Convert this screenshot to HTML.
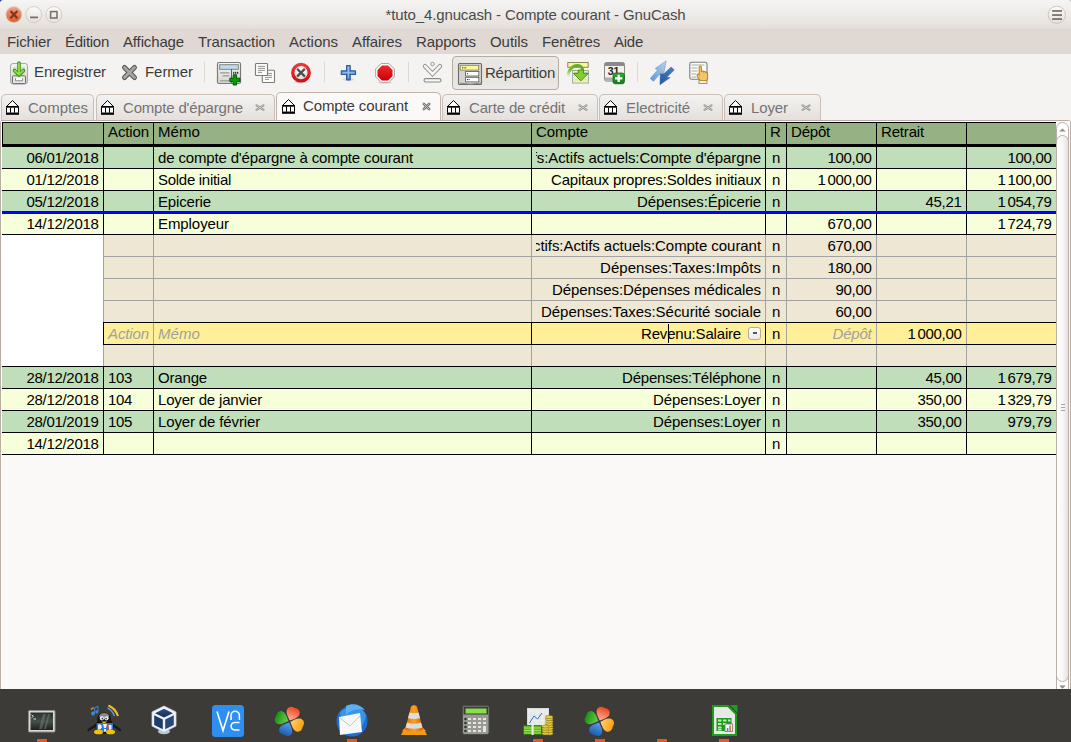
<!DOCTYPE html>
<html><head><meta charset="utf-8">
<style>
*{box-sizing:border-box;margin:0;padding:0}
html,body{width:1071px;height:742px;overflow:hidden;background:#f4f3f1;font-family:"Liberation Sans",sans-serif;position:relative}
.abs{position:absolute}
svg{position:absolute;overflow:visible}
#desk{left:0;top:0;width:1071px;height:742px;background:#c4c4c4}
#win{left:0;top:0;width:1071px;height:689px;background:#f4f3f1;border-radius:4px 4px 0 0;overflow:hidden}
#title{left:0;top:0;width:1071px;height:30px;background:linear-gradient(#f6f5f4,#e4dfda);border-bottom:1px solid #dcd5cf}
#title .t{position:absolute;left:0;width:1071px;top:6px;text-align:center;font-size:15px;color:#4a4a4a;}
#menu{left:0;top:30px;width:1071px;height:24px;background:#dfd8d3;}
#menu span{position:absolute;top:3px;font-size:15px;color:#3c3c3c;}
#tool{left:0;top:54px;width:1071px;height:39px;background:#f4f3f1;}
.tl{position:absolute;font-size:15px;color:#3c3c3c}
.sep{position:absolute;top:62px;width:1px;height:20px;background:#dcd8d3}
.tab{position:absolute;top:94px;height:27px;border:1px solid #c9bfb6;border-bottom:none;border-radius:5px 5px 0 0;background:linear-gradient(#f3f2f0,#e3dfdb);}
.tab .lb{position:absolute;top:5px;font-size:15px;color:#747474}
.tab.act{background:#faf9f8;top:92px;height:30px;border-color:#bfb4aa}
.tab.act .lb{color:#3c3c3c;top:6px}
.bank{position:absolute;top:6px;left:4px}
.hc{position:absolute;top:123px;height:21px;background:#96B183;font-size:15px;line-height:18px;padding-left:4px;white-space:nowrap;overflow:hidden;color:#000}
.c{position:absolute;height:21px;font-size:15px;line-height:22px;white-space:nowrap;overflow:hidden;color:#000}
.c .ra{position:absolute;right:4px;top:0}
.c.la{padding-left:4px}
.c.cc{text-align:center}
.c.ph{color:#a0a0a0;font-style:italic}
.ns{display:inline-block;width:2px}
.ind{position:absolute;top:739px;width:10px;height:3px;background:#e05a24}
</style></head><body>
<div id="desk" class="abs"></div>
<div class="abs" style="left:0;top:0;width:3px;height:4px;background:#2040b0"></div>
<div id="win" class="abs">
<div id="title" class="abs"><div class="t"><span class="tx"  style="letter-spacing:-0.123px">*tuto_4.gnucash - Compte courant - GnuCash</span></div></div>
<!-- window buttons -->
<svg width="70" height="29" style="left:0;top:0">
<defs>
<linearGradient id="gcl" x1="0" y1="0" x2="0" y2="1"><stop offset="0" stop-color="#f6a27e"/><stop offset="1" stop-color="#e2592c"/></linearGradient>
<linearGradient id="gbt" x1="0" y1="0" x2="0" y2="1"><stop offset="0" stop-color="#fbfbfa"/><stop offset="1" stop-color="#e4e0dc"/></linearGradient>
</defs>
<circle cx="13.8" cy="14.6" r="7.9" fill="url(#gcl)" stroke="#d9c9bf" stroke-width="0.8"/>
<path d="M10.5 11 L17.3 18.2 M17.3 11 L10.5 18.2" stroke="#7a3a22" stroke-width="2.4" stroke-linecap="butt"/>
<circle cx="33.8" cy="14.6" r="8" fill="url(#gbt)" stroke="#cfc7c0" stroke-width="0.9"/>
<rect x="30" y="16.5" width="8" height="1.8" fill="#7b736b"/>
<circle cx="53.8" cy="14.6" r="8" fill="url(#gbt)" stroke="#cfc7c0" stroke-width="0.9"/>
<rect x="50.6" y="11.6" width="6.4" height="6.4" fill="none" stroke="#7b736b" stroke-width="1.6"/>
</svg>
<!-- hamburger -->
<svg width="20" height="20" style="left:1047px;top:5px">
<circle cx="9.8" cy="9.8" r="8.6" fill="url(#gbt)" stroke="#c9bfb7" stroke-width="0.9"/>
<rect x="5.1" y="5.1" width="9.9" height="1.7" fill="#756d63"/>
<rect x="5.1" y="9.2" width="9.9" height="1.7" fill="#756d63"/>
<rect x="5.1" y="13.2" width="9.9" height="1.7" fill="#756d63"/>
</svg>
<div id="menu" class="abs">
<span class="tx" style="left:7px;letter-spacing:-0.145px" >Fichier</span>
<span class="tx" style="left:65px;letter-spacing:-0.268px" >Édition</span>
<span class="tx" style="left:123px;letter-spacing:-0.142px" >Affichage</span>
<span class="tx" style="left:198px;letter-spacing:-0.074px" >Transaction</span>
<span class="tx" style="left:289px;letter-spacing:-0.029px" >Actions</span>
<span class="tx" style="left:352px;letter-spacing:-0.074px" >Affaires</span>
<span class="tx" style="left:416px;letter-spacing:-0.109px" >Rapports</span>
<span class="tx" style="left:490px;letter-spacing:-0.057px" >Outils</span>
<span class="tx" style="left:542px;letter-spacing:-0.150px" >Fenêtres</span>
<span class="tx" style="left:614px;letter-spacing:-0.258px" >Aide</span>
</div>
<div id="tool" class="abs"></div>
<!--TOOLBAR-->
<svg width="24" height="24" style="left:8px;top:61px">
<defs>
<linearGradient id="gsv" x1="0" y1="0" x2="0" y2="1"><stop offset="0" stop-color="#f4f4f2"/><stop offset="1" stop-color="#cfcfcc"/></linearGradient>
<linearGradient id="gar" x1="0" y1="0" x2="1" y2="0"><stop offset="0" stop-color="#4aa81a"/><stop offset="0.5" stop-color="#a8f060"/><stop offset="1" stop-color="#4aa81a"/></linearGradient>
</defs>
<rect x="2.5" y="2.5" width="17" height="20.5" rx="2.5" fill="url(#gsv)" stroke="#a9a9a6" stroke-width="1"/>
<rect x="5" y="6" width="12" height="10" fill="#dcdcda"/>
<rect x="4.5" y="14.8" width="13" height="7.8" rx="1" fill="#e8e8e6" stroke="#6b6b68" stroke-width="1"/>
<path d="M7.5 17.3 v2.5 h7 v-2.5" fill="#fff" stroke="#8a8a86" stroke-width="1"/>
<path d="M11 2 v10 M6.5 9.5 L11 14 L15.5 9.5" fill="none" stroke="#3c9a12" stroke-width="3.6" stroke-linecap="round" stroke-linejoin="round"/>
<path d="M11 2.5 v10 M6.8 9.6 L11 13.6 L15.2 9.6" fill="none" stroke="#8ee04a" stroke-width="1.8" stroke-linecap="round" stroke-linejoin="round"/>
</svg>
<span class="tl tx"  style="left:34px;top:63px;letter-spacing:-0.124px">Enregistrer</span>
<svg width="20" height="20" style="left:120px;top:63px">
<path d="M4.5 4.5 L14.5 14.5 M14.5 4.5 L4.5 14.5" stroke="#5a5a58" stroke-width="5" stroke-linecap="round"/>
<path d="M4.5 4.5 L14.5 14.5 M14.5 4.5 L4.5 14.5" stroke="#a6a6a3" stroke-width="2.8" stroke-linecap="round"/>
</svg>
<span class="tl tx"  style="left:145px;top:63px;letter-spacing:-0.057px">Fermer</span>
<div class="sep" style="left:204px"></div>
<svg width="26" height="24" style="left:216px;top:61px">
<defs><linearGradient id="gnt" x1="0" y1="0" x2="0" y2="1"><stop offset="0" stop-color="#f6f6f5"/><stop offset="1" stop-color="#d6d6d3"/></linearGradient></defs>
<rect x="1.5" y="1.5" width="23" height="21" rx="1.5" fill="url(#gnt)" stroke="#7d7874" stroke-width="1.2"/>
<rect x="3.7" y="3.7" width="18.6" height="4.6" fill="#bcdaf2" stroke="#7b806a" stroke-width="0.9"/>
<path d="M15.5 8 V22" stroke="#55524e" stroke-width="0.9"/>
<rect x="4" y="11" width="9.5" height="1.6" fill="#a9a9a6"/>
<rect x="6.5" y="14" width="7" height="1.6" fill="#a9a9a6"/>
<rect x="4" y="19" width="9.5" height="1.6" fill="#a9a9a6"/>
<rect x="17" y="10.8" width="1.3" height="2" fill="#333"/><rect x="19" y="10.8" width="1.3" height="2" fill="#333"/><rect x="21" y="10.8" width="1.3" height="2" fill="#333"/>
<path d="M17.2 13.8 h3.4 v3.4 h3.4 v3.4 h-3.4 v3.4 h-3.4 v-3.4 h-3.4 v-3.4 h3.4 z" fill="#00a000" stroke="#005800" stroke-width="1"/>
</svg>
<svg width="22" height="22" style="left:254px;top:62px">
<rect x="8.3" y="8.3" width="12.2" height="12.2" rx="0.8" fill="#fbfbfa" stroke="#7d7c78" stroke-width="1.1"/>
<path d="M11 11.4 h7 M11 13.4 h7 M11 15.4 h7 M11 17.4 h4" stroke="#8a8a86" stroke-width="0.9"/>
<rect x="1.5" y="1.5" width="12" height="12" rx="0.8" fill="#fbfbfa" stroke="#7d7c78" stroke-width="1.1"/>
<path d="M4 4.4 h7 M4 6.4 h7 M4 8.4 h7 M4 10.4 h4" stroke="#8a8a86" stroke-width="0.9"/>
</svg>
<svg width="24" height="24" style="left:289px;top:61px">
<defs><radialGradient id="gdl" cx="0.5" cy="0.35" r="0.65"><stop offset="0" stop-color="#ffffff"/><stop offset="1" stop-color="#dcdcda"/></radialGradient>
<linearGradient id="gdr" x1="0" y1="0" x2="0" y2="1"><stop offset="0" stop-color="#f03a3a"/><stop offset="1" stop-color="#c80f14"/></linearGradient></defs>
<ellipse cx="12" cy="21" rx="7" ry="1.5" fill="#000" opacity="0.15"/>
<circle cx="12" cy="11.7" r="9.9" fill="url(#gdr)"/>
<circle cx="12" cy="11.7" r="6.6" fill="url(#gdl)"/>
<path d="M8.8 8.5 L15.2 14.9 M15.2 8.5 L8.8 14.9" stroke="#4e4e4c" stroke-width="2.4" stroke-linecap="round"/>
</svg>
<div class="sep" style="left:324px"></div>
<svg width="20" height="20" style="left:338px;top:62px">
<defs><linearGradient id="gpl" x1="0" y1="0" x2="0" y2="1"><stop offset="0" stop-color="#8cb8ea"/><stop offset="1" stop-color="#4a80c8"/></linearGradient></defs>
<ellipse cx="10.4" cy="17.6" rx="6" ry="1.4" fill="#000" opacity="0.1"/>
<path d="M8.6 3.6 h3.6 v5.3 h5.3 v3.6 h-5.3 v5.3 h-3.6 v-5.3 h-5.3 v-3.6 h5.3 z" fill="url(#gpl)" stroke="#2d5c9c" stroke-width="1.2" stroke-linejoin="round"/>
<path d="M10.4 5 v11 M4.6 10.7 h11.6" stroke="#b8d4f4" stroke-width="0.8" opacity="0.7"/>
</svg>
<svg width="24" height="24" style="left:373px;top:61px">
<defs><linearGradient id="gst" x1="0" y1="0" x2="0" y2="1"><stop offset="0" stop-color="#f02a2a"/><stop offset="1" stop-color="#c80008"/></linearGradient></defs>
<ellipse cx="12" cy="21.5" rx="7" ry="1.3" fill="#000" opacity="0.12"/>
<path d="M8.1 2.5 h7.8 l5.5 5.5 v7.8 l-5.5 5.5 h-7.8 l-5.5 -5.5 v-7.8 z" fill="#fafaf9" stroke="#a8a8a5" stroke-width="1"/>
<path d="M8.9 4.6 h6.2 l4.4 4.4 v6.2 l-4.4 4.4 h-6.2 l-4.4 -4.4 v-6.2 z" fill="url(#gst)"/>
</svg>
<div class="sep" style="left:408px"></div>
<svg width="22" height="22" style="left:422px;top:61px">
<path d="M3 5.2 L10.5 12.8 L18 5.2" fill="none" stroke="#8e8e8a" stroke-width="4.4" stroke-linecap="round" stroke-linejoin="miter"/>
<path d="M3 5.2 L10.5 12.8 L18 5.2" fill="none" stroke="#f6f6f4" stroke-width="2.6" stroke-linecap="round" stroke-linejoin="miter"/>
<circle cx="10.5" cy="3" r="1.8" fill="#f4f4f2" stroke="#9a9a96" stroke-width="1"/>
<rect x="2" y="17.6" width="17" height="3.4" rx="1.7" fill="#f8f8f6" stroke="#8a8a86" stroke-width="1.1"/>
</svg>
<div class="abs" style="left:452px;top:56px;width:107px;height:34px;border:1px solid #b8aca1;border-radius:4px;background:linear-gradient(#ebe8e5,#e6e2de 60%,#ece9e6)"></div>
<svg width="26" height="24" style="left:457px;top:62px">
<rect x="1.5" y="1.5" width="23" height="21" rx="1" fill="#d4d4d1" stroke="#6e6c68" stroke-width="1.1"/>
<rect x="3.2" y="3.3" width="18.5" height="4.8" fill="#fbf59a" stroke="#7c7a60" stroke-width="0.8"/>
<path d="M5 5.8 h4.5" stroke="#333" stroke-width="1" stroke-dasharray="1 0.6"/>
<rect x="8.6" y="9.4" width="13.2" height="4.6" fill="#fff" stroke="#555" stroke-width="0.8"/>
<rect x="8.6" y="15.3" width="13.2" height="4.6" fill="#fff" stroke="#555" stroke-width="0.8"/>
<rect x="10" y="11.2" width="1" height="1" fill="#222"/>
<rect x="10" y="17.1" width="1" height="1" fill="#222"/><rect x="11.6" y="17.1" width="1" height="1" fill="#222"/>
<path d="M3 21 Q13 23.5 24 21" stroke="#8a8884" stroke-width="1" fill="none"/>
</svg>
<span class="tl tx"  style="left:485px;top:64px;letter-spacing:-0.232px">Répartition</span>
<svg width="26" height="26" style="left:564px;top:60px">
<defs><linearGradient id="grc" x1="0" y1="1" x2="0.6" y2="0"><stop offset="0" stop-color="#7cc83a" stop-opacity="0"/><stop offset="0.5" stop-color="#74c030"/><stop offset="1" stop-color="#5cb020"/></linearGradient>
<linearGradient id="gpn" x1="0" y1="0" x2="0" y2="1"><stop offset="0" stop-color="#a8e0a0"/><stop offset="0.6" stop-color="#e8f8e0"/><stop offset="1" stop-color="#b8e8b0"/></linearGradient></defs>
<rect x="3.8" y="2.5" width="20.4" height="4.8" fill="#fbf59c" stroke="#8c8a5a" stroke-width="1"/>
<rect x="8.6" y="10.6" width="15.8" height="12.4" fill="#f0f0ee" stroke="#a2a29e" stroke-width="1"/>
<rect x="9.9" y="12.1" width="13.7" height="8.5" fill="url(#gpn)"/>
<rect x="9.9" y="20.4" width="13.7" height="1.8" fill="#f8f0a0"/>
<path d="M4 17 C4 9.5 9 5.6 13.6 5.6 C16.6 5.6 18.6 8 18.8 10.5" fill="none" stroke="url(#grc)" stroke-width="3"/>
<path d="M14.2 10 h5.2 v3.4 h5 L16.8 20.8 L9.4 13.4 h4.8 Z" fill="#86cc2c" stroke="#5a8c10" stroke-width="1"/>
</svg>
<svg width="24" height="26" style="left:603px;top:60px">
<defs><linearGradient id="gcal" x1="0" y1="0" x2="0" y2="1"><stop offset="0" stop-color="#2fae30"/><stop offset="1" stop-color="#157a18"/></linearGradient></defs>
<rect x="1.5" y="2.5" width="20" height="18.6" rx="1.8" fill="#f1f1ef" stroke="#8b8b88" stroke-width="1"/>
<rect x="2" y="3" width="19" height="3" fill="#8a8a87"/>
<rect x="2" y="17.5" width="19" height="3.2" fill="#aeaeab"/>
<text x="10.6" y="14.6" font-family="Liberation Sans" font-weight="bold" font-size="10.5" fill="#1e1e1e" text-anchor="middle">31</text>
<rect x="10" y="13" width="11.4" height="10.8" rx="2.2" fill="url(#gcal)" stroke="#0d5a10" stroke-width="0.7"/>
<path d="M15.7 14.7 v7.4 M12 18.4 h7.4" stroke="#fff" stroke-width="2.3"/>
</svg>
<div class="sep" style="left:637px"></div>
<svg width="28" height="28" style="left:649px;top:60px">
<defs>
<linearGradient id="gb1" x1="0" y1="1" x2="1" y2="0"><stop offset="0" stop-color="#5f95d2"/><stop offset="1" stop-color="#b9d3f0"/></linearGradient>
<linearGradient id="gb2" x1="1" y1="0" x2="0" y2="1"><stop offset="0" stop-color="#4a82c6"/><stop offset="1" stop-color="#2458a0"/></linearGradient>
</defs>
<path d="M17.2 0.9 L14.6 14.3 L12 12.86 L4.45 21.36 L1.15 18.44 L8.7 9.94 L6.1 8.5 Z" fill="url(#gb1)" stroke="#5d8fc8" stroke-width="0.5"/>
<path d="M11 24.8 L11.3 13.7 L14.68 14.06 L22.18 6.91 L25.22 10.09 L17.72 17.24 L21.1 17.6 Z" fill="url(#gb2)" stroke="#2a5a9c" stroke-width="0.5"/>
</svg>
<svg width="24" height="26" style="left:688px;top:60px">
<rect x="1.8" y="2.2" width="17.2" height="17" rx="1.8" fill="#fafaf9" stroke="#7c7b78" stroke-width="1.1"/>
<path d="M3.5 5 h13 M3.5 8 h6 M3.5 11 h6 M3.5 14 h5 M3.5 17 h5" stroke="#c4c8c0" stroke-width="1.4"/>
<rect x="11" y="20" width="8" height="3.5" fill="none" stroke="#6a9ad8" stroke-width="1"/>
<path d="M12.4 20.5 C10.6 19 9.2 17 9.2 15.2 C9.2 13.8 10.4 13.6 11.2 14.6 L11.2 7.2 C11.2 5.6 13.4 5.6 13.4 7.2 L13.4 11.4 C14.6 10.8 15.4 11 15.6 11.8 C16.6 11.2 17.6 11.6 17.8 12.6 C18.8 12.2 19.6 12.8 19.6 13.8 L19.6 17.8 C19.6 19.4 18.6 20.6 17.6 20.8 Z" fill="#f2c46e" stroke="#c98414" stroke-width="1.1"/>
</svg>

<!--/TOOLBAR-->
<!--TABS-->
<div class="tab" style="left:1px;width:93px;top:94px;height:27px"></div>
<svg width="14" height="16" style="left:6px;top:100px"><path d="M6.5 0.5 L0.6 6.5 H12.4 Z" fill="#fff" stroke="#000" stroke-width="1" stroke-linejoin="miter"/><rect x="0" y="6.2" width="13" height="1.4" fill="#000"/><rect x="0" y="7.4" width="13" height="5.4" fill="#000"/><rect x="1" y="7.8" width="3" height="4.8" fill="#fff"/><rect x="5" y="7.8" width="3" height="4.8" fill="#fff"/><rect x="9" y="7.8" width="3" height="4.8" fill="#fff"/><rect x="0" y="12.8" width="13" height="2" fill="#000"/></svg>
<span class="tl tx"  style="left:28px;top:99px;color:#747474;letter-spacing:-0.004px">Comptes</span>
<div class="tab" style="left:96px;width:179px;top:94px;height:27px"></div>
<svg width="14" height="16" style="left:101px;top:100px"><path d="M6.5 0.5 L0.6 6.5 H12.4 Z" fill="#fff" stroke="#000" stroke-width="1" stroke-linejoin="miter"/><rect x="0" y="6.2" width="13" height="1.4" fill="#000"/><rect x="0" y="7.4" width="13" height="5.4" fill="#000"/><rect x="1" y="7.8" width="3" height="4.8" fill="#fff"/><rect x="5" y="7.8" width="3" height="4.8" fill="#fff"/><rect x="9" y="7.8" width="3" height="4.8" fill="#fff"/><rect x="0" y="12.8" width="13" height="2" fill="#000"/></svg>
<span class="tl tx"  style="left:123px;top:99px;color:#747474;letter-spacing:-0.185px">Compte d'épargne</span>
<svg width="11" height="8" style="left:255px;top:104px"><path d="M1.5 1.3 L8.5 5.8 M8.5 1.3 L1.5 5.8" stroke="#878b86" stroke-width="2" stroke-linecap="round"/><path d="M1.5 1.3 L8.5 5.8 M8.5 1.3 L1.5 5.8" stroke="#d4d7d3" stroke-width="0.8" stroke-linecap="round"/></svg>
<div class="tab act" style="left:276px;width:165px;top:92px;height:30px"></div>
<svg width="14" height="16" style="left:282px;top:99px"><path d="M6.5 0.5 L0.6 6.5 H12.4 Z" fill="#fff" stroke="#000" stroke-width="1" stroke-linejoin="miter"/><rect x="0" y="6.2" width="13" height="1.4" fill="#000"/><rect x="0" y="7.4" width="13" height="5.4" fill="#000"/><rect x="1" y="7.8" width="3" height="4.8" fill="#fff"/><rect x="5" y="7.8" width="3" height="4.8" fill="#fff"/><rect x="9" y="7.8" width="3" height="4.8" fill="#fff"/><rect x="0" y="12.8" width="13" height="2" fill="#000"/></svg>
<span class="tl tx"  style="left:303px;top:97px;color:#3c3c3c;letter-spacing:-0.124px">Compte courant</span>
<svg width="10" height="10" style="left:422px;top:102px"><path d="M1.8 1.8 L7.2 7.2 M7.2 1.8 L1.8 7.2" stroke="#70746f" stroke-width="2.6" stroke-linecap="round"/><path d="M1.8 1.8 L7.2 7.2 M7.2 1.8 L1.8 7.2" stroke="#c9ccc8" stroke-width="0.9" stroke-linecap="round"/></svg>
<div class="tab" style="left:442px;width:156px;top:94px;height:27px"></div>
<svg width="14" height="16" style="left:447px;top:100px"><path d="M6.5 0.5 L0.6 6.5 H12.4 Z" fill="#fff" stroke="#000" stroke-width="1" stroke-linejoin="miter"/><rect x="0" y="6.2" width="13" height="1.4" fill="#000"/><rect x="0" y="7.4" width="13" height="5.4" fill="#000"/><rect x="1" y="7.8" width="3" height="4.8" fill="#fff"/><rect x="5" y="7.8" width="3" height="4.8" fill="#fff"/><rect x="9" y="7.8" width="3" height="4.8" fill="#fff"/><rect x="0" y="12.8" width="13" height="2" fill="#000"/></svg>
<span class="tl tx"  style="left:469px;top:99px;color:#747474;letter-spacing:-0.159px">Carte de crédit</span>
<svg width="11" height="8" style="left:578px;top:104px"><path d="M1.5 1.3 L8.5 5.8 M8.5 1.3 L1.5 5.8" stroke="#878b86" stroke-width="2" stroke-linecap="round"/><path d="M1.5 1.3 L8.5 5.8 M8.5 1.3 L1.5 5.8" stroke="#d4d7d3" stroke-width="0.8" stroke-linecap="round"/></svg>
<div class="tab" style="left:599px;width:124px;top:94px;height:27px"></div>
<svg width="14" height="16" style="left:604px;top:100px"><path d="M6.5 0.5 L0.6 6.5 H12.4 Z" fill="#fff" stroke="#000" stroke-width="1" stroke-linejoin="miter"/><rect x="0" y="6.2" width="13" height="1.4" fill="#000"/><rect x="0" y="7.4" width="13" height="5.4" fill="#000"/><rect x="1" y="7.8" width="3" height="4.8" fill="#fff"/><rect x="5" y="7.8" width="3" height="4.8" fill="#fff"/><rect x="9" y="7.8" width="3" height="4.8" fill="#fff"/><rect x="0" y="12.8" width="13" height="2" fill="#000"/></svg>
<span class="tl tx"  style="left:626px;top:99px;color:#747474;letter-spacing:-0.094px">Electricité</span>
<svg width="11" height="8" style="left:703px;top:104px"><path d="M1.5 1.3 L8.5 5.8 M8.5 1.3 L1.5 5.8" stroke="#878b86" stroke-width="2" stroke-linecap="round"/><path d="M1.5 1.3 L8.5 5.8 M8.5 1.3 L1.5 5.8" stroke="#d4d7d3" stroke-width="0.8" stroke-linecap="round"/></svg>
<div class="tab" style="left:724px;width:97px;top:94px;height:27px"></div>
<svg width="14" height="16" style="left:729px;top:100px"><path d="M6.5 0.5 L0.6 6.5 H12.4 Z" fill="#fff" stroke="#000" stroke-width="1" stroke-linejoin="miter"/><rect x="0" y="6.2" width="13" height="1.4" fill="#000"/><rect x="0" y="7.4" width="13" height="5.4" fill="#000"/><rect x="1" y="7.8" width="3" height="4.8" fill="#fff"/><rect x="5" y="7.8" width="3" height="4.8" fill="#fff"/><rect x="9" y="7.8" width="3" height="4.8" fill="#fff"/><rect x="0" y="12.8" width="13" height="2" fill="#000"/></svg>
<span class="tl tx"  style="left:751px;top:99px;color:#747474;letter-spacing:-0.106px">Loyer</span>
<svg width="11" height="8" style="left:801px;top:104px"><path d="M1.5 1.3 L8.5 5.8 M8.5 1.3 L1.5 5.8" stroke="#878b86" stroke-width="2" stroke-linecap="round"/><path d="M1.5 1.3 L8.5 5.8 M8.5 1.3 L1.5 5.8" stroke="#d4d7d3" stroke-width="0.8" stroke-linecap="round"/></svg>
<!--/TABS-->
<!-- register frame -->
<div class="abs" style="left:0;top:120px;width:1071px;height:569px;border:1px solid #b9aea4;border-bottom:none;border-radius:3px 3px 0 0;background:#fff"></div>
<div class="abs" style="left:1px;top:121px;width:1055px;height:568px;background:#faf9f7"></div>
<div class="abs" style="left:1px;top:121px;width:1055px;height:1px;background:#fff"></div>
<div class="abs" style="left:1px;top:121px;width:1px;height:568px;background:#fff"></div>
<!--GRID-->
<div class="abs" style="left:2px;top:122px;width:1054px;height:25px;background:#000"></div>
<div class="hc" style="left:3px;width:100px"><span class="tx"  style="letter-spacing:0.000px"></span></div>
<div class="hc" style="left:104px;width:49px"><span class="tx"  style="letter-spacing:-0.117px">Action</span></div>
<div class="hc" style="left:154px;width:377px"><span class="tx"  style="letter-spacing:0.078px">Mémo</span></div>
<div class="hc" style="left:532px;width:233px"><span class="tx"  style="letter-spacing:-0.089px">Compte</span></div>
<div class="hc" style="left:766px;width:20px"><span class="tx"  style="letter-spacing:0.156px">R</span></div>
<div class="hc" style="left:787px;width:89px"><span class="tx"  style="letter-spacing:-0.206px">Dépôt</span></div>
<div class="hc" style="left:877px;width:89px"><span class="tx"  style="letter-spacing:-0.170px">Retrait</span></div>
<div class="hc" style="left:967px;width:89px"><span class="tx"  style="letter-spacing:0.000px"></span></div>
<div class="abs" style="left:2px;top:147px;width:1054px;height:22px;background:#BFDEB9"></div>
<div class="abs" style="left:103px;top:147px;width:1px;height:21px;background:#000"></div>
<div class="abs" style="left:153px;top:147px;width:1px;height:21px;background:#000"></div>
<div class="abs" style="left:531px;top:147px;width:1px;height:21px;background:#000"></div>
<div class="abs" style="left:765px;top:147px;width:1px;height:21px;background:#000"></div>
<div class="abs" style="left:786px;top:147px;width:1px;height:21px;background:#000"></div>
<div class="abs" style="left:876px;top:147px;width:1px;height:21px;background:#000"></div>
<div class="abs" style="left:966px;top:147px;width:1px;height:21px;background:#000"></div>
<div class="c" style="top:147px;left:2px;width:101px"><span class="ra tx"  style="right:4.5px;letter-spacing:-0.308px">06/01/2018</span></div>
<div class="c la" style="top:147px;left:154px;width:377px"><span class="tx"  style="letter-spacing:-0.154px">de compte d'épargne à compte courant</span></div>
<div class="c" style="top:147px;left:536px;width:229px"><span class="ra tx"  style="right:4px;letter-spacing:-0.088px">Actifs:Actifs actuels:Compte d'épargne</span></div>
<div class="c cc" style="top:147px;left:766px;width:20px"><span class="tx"  style="letter-spacing:-0.344px">n</span></div>
<div class="c" style="top:147px;left:787px;width:89px"><span class="ra tx"  style="right:4.5px;letter-spacing:-0.315px">100,00</span></div>
<div class="c" style="top:147px;left:967px;width:89px"><span class="ra tx"  style="right:4.5px;letter-spacing:-0.315px">100,00</span></div>
<div class="abs" style="left:2px;top:169px;width:1054px;height:22px;background:#F6FFDA"></div>
<div class="abs" style="left:103px;top:169px;width:1px;height:21px;background:#000"></div>
<div class="abs" style="left:153px;top:169px;width:1px;height:21px;background:#000"></div>
<div class="abs" style="left:531px;top:169px;width:1px;height:21px;background:#000"></div>
<div class="abs" style="left:765px;top:169px;width:1px;height:21px;background:#000"></div>
<div class="abs" style="left:786px;top:169px;width:1px;height:21px;background:#000"></div>
<div class="abs" style="left:876px;top:169px;width:1px;height:21px;background:#000"></div>
<div class="abs" style="left:966px;top:169px;width:1px;height:21px;background:#000"></div>
<div class="c" style="top:169px;left:2px;width:101px"><span class="ra tx"  style="right:4.5px;letter-spacing:-0.308px">01/12/2018</span></div>
<div class="c la" style="top:169px;left:154px;width:377px"><span class="tx"  style="letter-spacing:-0.286px">Solde initial</span></div>
<div class="c" style="top:169px;left:536px;width:229px"><span class="ra tx"  style="right:4px;letter-spacing:-0.160px">Capitaux propres:Soldes initiaux</span></div>
<div class="c cc" style="top:169px;left:766px;width:20px"><span class="tx"  style="letter-spacing:-0.344px">n</span></div>
<div class="c" style="top:169px;left:787px;width:89px"><span class="ra tx"  style="right:4.5px;letter-spacing:-0.319px">1<span class="ns"></span>000,00</span></div>
<div class="c" style="top:169px;left:967px;width:89px"><span class="ra tx"  style="right:4.5px;letter-spacing:-0.321px">1<span class="ns"></span>100,00</span></div>
<div class="abs" style="left:2px;top:191px;width:1054px;height:22px;background:#BFDEB9"></div>
<div class="abs" style="left:103px;top:191px;width:1px;height:21px;background:#000"></div>
<div class="abs" style="left:153px;top:191px;width:1px;height:21px;background:#000"></div>
<div class="abs" style="left:531px;top:191px;width:1px;height:21px;background:#000"></div>
<div class="abs" style="left:765px;top:191px;width:1px;height:21px;background:#000"></div>
<div class="abs" style="left:786px;top:191px;width:1px;height:21px;background:#000"></div>
<div class="abs" style="left:876px;top:191px;width:1px;height:21px;background:#000"></div>
<div class="abs" style="left:966px;top:191px;width:1px;height:21px;background:#000"></div>
<div class="c" style="top:191px;left:2px;width:101px"><span class="ra tx"  style="right:4.5px;letter-spacing:-0.308px">05/12/2018</span></div>
<div class="c la" style="top:191px;left:154px;width:377px"><span class="tx"  style="letter-spacing:-0.150px">Epicerie</span></div>
<div class="c" style="top:191px;left:536px;width:229px"><span class="ra tx"  style="right:4px;letter-spacing:-0.112px">Dépenses:Épicerie</span></div>
<div class="c cc" style="top:191px;left:766px;width:20px"><span class="tx"  style="letter-spacing:-0.344px">n</span></div>
<div class="c" style="top:191px;left:877px;width:89px"><span class="ra tx"  style="right:4.5px;letter-spacing:-0.309px">45,21</span></div>
<div class="c" style="top:191px;left:967px;width:89px"><span class="ra tx"  style="right:4.5px;letter-spacing:-0.319px">1<span class="ns"></span>054,79</span></div>
<div class="abs" style="left:2px;top:213px;width:1054px;height:22px;background:#F6FFDA"></div>
<div class="abs" style="left:103px;top:213px;width:1px;height:21px;background:#000"></div>
<div class="abs" style="left:153px;top:213px;width:1px;height:21px;background:#000"></div>
<div class="abs" style="left:531px;top:213px;width:1px;height:21px;background:#000"></div>
<div class="abs" style="left:765px;top:213px;width:1px;height:21px;background:#000"></div>
<div class="abs" style="left:786px;top:213px;width:1px;height:21px;background:#000"></div>
<div class="abs" style="left:876px;top:213px;width:1px;height:21px;background:#000"></div>
<div class="abs" style="left:966px;top:213px;width:1px;height:21px;background:#000"></div>
<div class="c" style="top:213px;left:2px;width:101px"><span class="ra tx"  style="right:4.5px;letter-spacing:-0.308px">14/12/2018</span></div>
<div class="c la" style="top:213px;left:154px;width:377px"><span class="tx"  style="letter-spacing:-0.078px">Employeur</span></div>
<div class="c" style="top:213px;left:787px;width:89px"><span class="ra tx"  style="right:4.5px;letter-spacing:-0.315px">670,00</span></div>
<div class="c" style="top:213px;left:967px;width:89px"><span class="ra tx"  style="right:4.5px;letter-spacing:-0.319px">1<span class="ns"></span>724,79</span></div>
<div class="abs" style="left:2px;top:235px;width:101px;height:22px;background:#fff"></div>
<div class="abs" style="left:103px;top:235px;width:953px;height:22px;background:#EDE7D3"></div>
<div class="abs" style="left:103px;top:235px;width:1px;height:22px;background:#a3a3a3"></div>
<div class="abs" style="left:153px;top:235px;width:1px;height:21px;background:#a3a3a3"></div>
<div class="abs" style="left:531px;top:235px;width:1px;height:21px;background:#a3a3a3"></div>
<div class="abs" style="left:765px;top:235px;width:1px;height:21px;background:#a3a3a3"></div>
<div class="abs" style="left:786px;top:235px;width:1px;height:21px;background:#a3a3a3"></div>
<div class="abs" style="left:876px;top:235px;width:1px;height:21px;background:#a3a3a3"></div>
<div class="abs" style="left:966px;top:235px;width:1px;height:21px;background:#a3a3a3"></div>
<div class="c" style="top:235px;left:536px;width:229px"><span class="ra tx"  style="right:4px;letter-spacing:-0.059px">Actifs:Actifs actuels:Compte courant</span></div>
<div class="c cc" style="top:235px;left:766px;width:20px"><span class="tx"  style="letter-spacing:-0.344px">n</span></div>
<div class="c" style="top:235px;left:787px;width:89px"><span class="ra tx"  style="right:4.5px;letter-spacing:-0.315px">670,00</span></div>
<div class="abs" style="left:2px;top:257px;width:101px;height:22px;background:#fff"></div>
<div class="abs" style="left:103px;top:257px;width:953px;height:22px;background:#EDE7D3"></div>
<div class="abs" style="left:103px;top:257px;width:1px;height:22px;background:#a3a3a3"></div>
<div class="abs" style="left:153px;top:257px;width:1px;height:21px;background:#a3a3a3"></div>
<div class="abs" style="left:531px;top:257px;width:1px;height:21px;background:#a3a3a3"></div>
<div class="abs" style="left:765px;top:257px;width:1px;height:21px;background:#a3a3a3"></div>
<div class="abs" style="left:786px;top:257px;width:1px;height:21px;background:#a3a3a3"></div>
<div class="abs" style="left:876px;top:257px;width:1px;height:21px;background:#a3a3a3"></div>
<div class="abs" style="left:966px;top:257px;width:1px;height:21px;background:#a3a3a3"></div>
<div class="c" style="top:257px;left:536px;width:229px"><span class="ra tx"  style="right:4px;letter-spacing:0.043px">Dépenses:Taxes:Impôts</span></div>
<div class="c cc" style="top:257px;left:766px;width:20px"><span class="tx"  style="letter-spacing:-0.344px">n</span></div>
<div class="c" style="top:257px;left:787px;width:89px"><span class="ra tx"  style="right:4.5px;letter-spacing:-0.315px">180,00</span></div>
<div class="abs" style="left:2px;top:279px;width:101px;height:22px;background:#fff"></div>
<div class="abs" style="left:103px;top:279px;width:953px;height:22px;background:#EDE7D3"></div>
<div class="abs" style="left:103px;top:279px;width:1px;height:22px;background:#a3a3a3"></div>
<div class="abs" style="left:153px;top:279px;width:1px;height:21px;background:#a3a3a3"></div>
<div class="abs" style="left:531px;top:279px;width:1px;height:21px;background:#a3a3a3"></div>
<div class="abs" style="left:765px;top:279px;width:1px;height:21px;background:#a3a3a3"></div>
<div class="abs" style="left:786px;top:279px;width:1px;height:21px;background:#a3a3a3"></div>
<div class="abs" style="left:876px;top:279px;width:1px;height:21px;background:#a3a3a3"></div>
<div class="abs" style="left:966px;top:279px;width:1px;height:21px;background:#a3a3a3"></div>
<div class="c" style="top:279px;left:536px;width:229px"><span class="ra tx"  style="right:4px;letter-spacing:-0.072px">Dépenses:Dépenses médicales</span></div>
<div class="c cc" style="top:279px;left:766px;width:20px"><span class="tx"  style="letter-spacing:-0.344px">n</span></div>
<div class="c" style="top:279px;left:787px;width:89px"><span class="ra tx"  style="right:4.5px;letter-spacing:-0.309px">90,00</span></div>
<div class="abs" style="left:2px;top:301px;width:101px;height:22px;background:#fff"></div>
<div class="abs" style="left:103px;top:301px;width:953px;height:22px;background:#EDE7D3"></div>
<div class="abs" style="left:103px;top:301px;width:1px;height:22px;background:#a3a3a3"></div>
<div class="abs" style="left:153px;top:301px;width:1px;height:21px;background:#a3a3a3"></div>
<div class="abs" style="left:531px;top:301px;width:1px;height:21px;background:#a3a3a3"></div>
<div class="abs" style="left:765px;top:301px;width:1px;height:21px;background:#a3a3a3"></div>
<div class="abs" style="left:786px;top:301px;width:1px;height:21px;background:#a3a3a3"></div>
<div class="abs" style="left:876px;top:301px;width:1px;height:21px;background:#a3a3a3"></div>
<div class="abs" style="left:966px;top:301px;width:1px;height:21px;background:#a3a3a3"></div>
<div class="c" style="top:301px;left:536px;width:229px"><span class="ra tx"  style="right:4px;letter-spacing:-0.031px">Dépenses:Taxes:Sécurité sociale</span></div>
<div class="c cc" style="top:301px;left:766px;width:20px"><span class="tx"  style="letter-spacing:-0.344px">n</span></div>
<div class="c" style="top:301px;left:787px;width:89px"><span class="ra tx"  style="right:4.5px;letter-spacing:-0.309px">60,00</span></div>
<div class="abs" style="left:2px;top:323px;width:101px;height:22px;background:#fff"></div>
<div class="abs" style="left:103px;top:323px;width:953px;height:22px;background:#FFEF98"></div>
<div class="abs" style="left:103px;top:323px;width:1px;height:22px;background:#000"></div>
<div class="abs" style="left:153px;top:323px;width:1px;height:21px;background:#a3a3a3"></div>
<div class="abs" style="left:531px;top:323px;width:1px;height:21px;background:#000"></div>
<div class="abs" style="left:765px;top:323px;width:1px;height:21px;background:#000"></div>
<div class="abs" style="left:786px;top:323px;width:1px;height:21px;background:#a3a3a3"></div>
<div class="abs" style="left:876px;top:323px;width:1px;height:21px;background:#a3a3a3"></div>
<div class="abs" style="left:966px;top:323px;width:1px;height:21px;background:#a3a3a3"></div>
<div class="c la ph" style="top:323px;left:104px;width:49px"><span class="tx"  style="letter-spacing:-0.117px">Action</span></div>
<div class="c la ph" style="top:323px;left:154px;width:377px"><span class="tx"  style="letter-spacing:0.078px">Mémo</span></div>
<div class="c" style="top:323px;left:536px;width:229px"><span class="ra tx"  style="right:24px;letter-spacing:-0.183px">Revenu:Salaire</span></div>
<div class="c cc" style="top:323px;left:766px;width:20px"><span class="tx"  style="letter-spacing:-0.344px">n</span></div>
<div class="c ph" style="top:323px;left:787px;width:89px"><span class="ra tx"  style="right:4.5px;letter-spacing:-0.206px">Dépôt</span></div>
<div class="c" style="top:323px;left:877px;width:89px"><span class="ra tx"  style="right:4.5px;letter-spacing:-0.319px">1<span class="ns"></span>000,00</span></div>
<div class="abs" style="left:2px;top:345px;width:101px;height:22px;background:#fff"></div>
<div class="abs" style="left:103px;top:345px;width:953px;height:22px;background:#EDE7D3"></div>
<div class="abs" style="left:103px;top:345px;width:1px;height:22px;background:#a3a3a3"></div>
<div class="abs" style="left:153px;top:345px;width:1px;height:21px;background:#a3a3a3"></div>
<div class="abs" style="left:531px;top:345px;width:1px;height:21px;background:#a3a3a3"></div>
<div class="abs" style="left:765px;top:345px;width:1px;height:21px;background:#a3a3a3"></div>
<div class="abs" style="left:786px;top:345px;width:1px;height:21px;background:#a3a3a3"></div>
<div class="abs" style="left:876px;top:345px;width:1px;height:21px;background:#a3a3a3"></div>
<div class="abs" style="left:966px;top:345px;width:1px;height:21px;background:#a3a3a3"></div>
<div class="abs" style="left:2px;top:367px;width:1054px;height:22px;background:#BFDEB9"></div>
<div class="abs" style="left:103px;top:367px;width:1px;height:21px;background:#000"></div>
<div class="abs" style="left:153px;top:367px;width:1px;height:21px;background:#000"></div>
<div class="abs" style="left:531px;top:367px;width:1px;height:21px;background:#000"></div>
<div class="abs" style="left:765px;top:367px;width:1px;height:21px;background:#000"></div>
<div class="abs" style="left:786px;top:367px;width:1px;height:21px;background:#000"></div>
<div class="abs" style="left:876px;top:367px;width:1px;height:21px;background:#000"></div>
<div class="abs" style="left:966px;top:367px;width:1px;height:21px;background:#000"></div>
<div class="c" style="top:367px;left:2px;width:101px"><span class="ra tx"  style="right:4.5px;letter-spacing:-0.308px">28/12/2018</span></div>
<div class="c la" style="top:367px;left:104px;width:49px"><span class="tx"  style="letter-spacing:-0.344px">103</span></div>
<div class="c la" style="top:367px;left:154px;width:377px"><span class="tx"  style="letter-spacing:-0.174px">Orange</span></div>
<div class="c" style="top:367px;left:536px;width:229px"><span class="ra tx"  style="right:4px;letter-spacing:-0.201px">Dépenses:Téléphone</span></div>
<div class="c cc" style="top:367px;left:766px;width:20px"><span class="tx"  style="letter-spacing:-0.344px">n</span></div>
<div class="c" style="top:367px;left:877px;width:89px"><span class="ra tx"  style="right:4.5px;letter-spacing:-0.309px">45,00</span></div>
<div class="c" style="top:367px;left:967px;width:89px"><span class="ra tx"  style="right:4.5px;letter-spacing:-0.319px">1<span class="ns"></span>679,79</span></div>
<div class="abs" style="left:2px;top:389px;width:1054px;height:22px;background:#F6FFDA"></div>
<div class="abs" style="left:103px;top:389px;width:1px;height:21px;background:#000"></div>
<div class="abs" style="left:153px;top:389px;width:1px;height:21px;background:#000"></div>
<div class="abs" style="left:531px;top:389px;width:1px;height:21px;background:#000"></div>
<div class="abs" style="left:765px;top:389px;width:1px;height:21px;background:#000"></div>
<div class="abs" style="left:786px;top:389px;width:1px;height:21px;background:#000"></div>
<div class="abs" style="left:876px;top:389px;width:1px;height:21px;background:#000"></div>
<div class="abs" style="left:966px;top:389px;width:1px;height:21px;background:#000"></div>
<div class="c" style="top:389px;left:2px;width:101px"><span class="ra tx"  style="right:4.5px;letter-spacing:-0.308px">28/12/2018</span></div>
<div class="c la" style="top:389px;left:104px;width:49px"><span class="tx"  style="letter-spacing:-0.344px">104</span></div>
<div class="c la" style="top:389px;left:154px;width:377px"><span class="tx"  style="letter-spacing:-0.171px">Loyer de janvier</span></div>
<div class="c" style="top:389px;left:536px;width:229px"><span class="ra tx"  style="right:4px;letter-spacing:-0.088px">Dépenses:Loyer</span></div>
<div class="c cc" style="top:389px;left:766px;width:20px"><span class="tx"  style="letter-spacing:-0.344px">n</span></div>
<div class="c" style="top:389px;left:877px;width:89px"><span class="ra tx"  style="right:4.5px;letter-spacing:-0.315px">350,00</span></div>
<div class="c" style="top:389px;left:967px;width:89px"><span class="ra tx"  style="right:4.5px;letter-spacing:-0.319px">1<span class="ns"></span>329,79</span></div>
<div class="abs" style="left:2px;top:411px;width:1054px;height:22px;background:#BFDEB9"></div>
<div class="abs" style="left:103px;top:411px;width:1px;height:21px;background:#000"></div>
<div class="abs" style="left:153px;top:411px;width:1px;height:21px;background:#000"></div>
<div class="abs" style="left:531px;top:411px;width:1px;height:21px;background:#000"></div>
<div class="abs" style="left:765px;top:411px;width:1px;height:21px;background:#000"></div>
<div class="abs" style="left:786px;top:411px;width:1px;height:21px;background:#000"></div>
<div class="abs" style="left:876px;top:411px;width:1px;height:21px;background:#000"></div>
<div class="abs" style="left:966px;top:411px;width:1px;height:21px;background:#000"></div>
<div class="c" style="top:411px;left:2px;width:101px"><span class="ra tx"  style="right:4.5px;letter-spacing:-0.308px">28/01/2019</span></div>
<div class="c la" style="top:411px;left:104px;width:49px"><span class="tx"  style="letter-spacing:-0.344px">105</span></div>
<div class="c la" style="top:411px;left:154px;width:377px"><span class="tx"  style="letter-spacing:-0.139px">Loyer de février</span></div>
<div class="c" style="top:411px;left:536px;width:229px"><span class="ra tx"  style="right:4px;letter-spacing:-0.088px">Dépenses:Loyer</span></div>
<div class="c cc" style="top:411px;left:766px;width:20px"><span class="tx"  style="letter-spacing:-0.344px">n</span></div>
<div class="c" style="top:411px;left:877px;width:89px"><span class="ra tx"  style="right:4.5px;letter-spacing:-0.315px">350,00</span></div>
<div class="c" style="top:411px;left:967px;width:89px"><span class="ra tx"  style="right:4.5px;letter-spacing:-0.315px">979,79</span></div>
<div class="abs" style="left:2px;top:433px;width:1054px;height:22px;background:#F6FFDA"></div>
<div class="abs" style="left:103px;top:433px;width:1px;height:21px;background:#000"></div>
<div class="abs" style="left:153px;top:433px;width:1px;height:21px;background:#000"></div>
<div class="abs" style="left:531px;top:433px;width:1px;height:21px;background:#000"></div>
<div class="abs" style="left:765px;top:433px;width:1px;height:21px;background:#000"></div>
<div class="abs" style="left:786px;top:433px;width:1px;height:21px;background:#000"></div>
<div class="abs" style="left:876px;top:433px;width:1px;height:21px;background:#000"></div>
<div class="abs" style="left:966px;top:433px;width:1px;height:21px;background:#000"></div>
<div class="c" style="top:433px;left:2px;width:101px"><span class="ra tx"  style="right:4.5px;letter-spacing:-0.308px">14/12/2018</span></div>
<div class="c cc" style="top:433px;left:766px;width:20px"><span class="tx"  style="letter-spacing:-0.344px">n</span></div>
<div class="abs" style="left:2px;top:168px;width:1054px;height:1px;background:#000"></div>
<div class="abs" style="left:2px;top:190px;width:1054px;height:1px;background:#000"></div>
<div class="abs" style="left:2px;top:212px;width:1054px;height:1px;background:#000"></div>
<div class="abs" style="left:2px;top:234px;width:1054px;height:1px;background:#000"></div>
<div class="abs" style="left:103px;top:256px;width:953px;height:1px;background:#a3a3a3"></div>
<div class="abs" style="left:103px;top:278px;width:953px;height:1px;background:#a3a3a3"></div>
<div class="abs" style="left:103px;top:300px;width:953px;height:1px;background:#a3a3a3"></div>
<div class="abs" style="left:2px;top:322px;width:101px;height:1px;background:#fff"></div>
<div class="abs" style="left:103px;top:322px;width:953px;height:1px;background:#000"></div>
<div class="abs" style="left:2px;top:344px;width:101px;height:1px;background:#fff"></div>
<div class="abs" style="left:103px;top:344px;width:953px;height:1px;background:#000"></div>
<div class="abs" style="left:2px;top:366px;width:1054px;height:1px;background:#000"></div>
<div class="abs" style="left:2px;top:388px;width:1054px;height:1px;background:#000"></div>
<div class="abs" style="left:2px;top:410px;width:1054px;height:1px;background:#000"></div>
<div class="abs" style="left:2px;top:432px;width:1054px;height:1px;background:#000"></div>
<div class="abs" style="left:2px;top:454px;width:1054px;height:1px;background:#000"></div>
<div class="abs" style="left:2px;top:211px;width:1054px;height:3px;background:#0000ff"></div>
<div class="abs" style="left:668px;top:324px;width:1px;height:19px;background:#000"></div>
<div class="abs" style="left:748px;top:327px;width:13px;height:13px;border:1px solid #b3aca4;border-radius:3px;background:linear-gradient(#ffffff,#ebe8e4)"></div>
<div class="abs" style="left:753px;top:332px;width:4px;height:2px;background:#555"></div>
<!--/GRID-->
<!--SCROLL-->
<div class="abs" style="left:1056px;top:121px;width:14px;height:568px;background:#fcfbfb"></div>
<div class="abs" style="left:1056px;top:122px;width:13px;height:578px;border:1px solid #b9afa6;border-radius:6.5px;background:#fff"></div>
<div class="abs" style="left:1056px;top:135px;width:13px;height:547px;border:1px solid #b9afa6;border-radius:6.5px;background:linear-gradient(90deg,#ffffff,#f7f6f5 55%,#e4e0dc)"></div>
<svg width="14" height="10" style="left:1056px;top:125px"><path d="M3.2 6.6 L6.5 3.4 L9.8 6.6 Z" fill="#8e8a86"/></svg>
<svg width="14" height="10" style="left:1056px;top:682px"><path d="M3.2 3.6 L6.5 6.8 L9.8 3.6 Z" fill="#8e8a86"/></svg>
<div class="abs" style="left:1061px;top:404px;width:4px;height:1px;background:#a9a5a0"></div>
<div class="abs" style="left:1061px;top:407px;width:4px;height:1px;background:#a9a5a0"></div>
<div class="abs" style="left:1061px;top:410px;width:4px;height:1px;background:#a9a5a0"></div>

<!--/SCROLL-->
</div>
<!--TASK-->
<div class="abs" style="left:0;top:689px;width:1071px;height:53px;background:#3c3b37"></div>
<svg width="1071" height="53" style="left:0;top:689px">
<defs>
<linearGradient id="tterm" x1="0" y1="0" x2="0" y2="1"><stop offset="0" stop-color="#2a302c"/><stop offset="0.5" stop-color="#46504a"/><stop offset="1" stop-color="#1e2220"/></linearGradient>
<linearGradient id="tvlc" x1="0" y1="0" x2="1" y2="0"><stop offset="0" stop-color="#e06a00"/><stop offset="0.5" stop-color="#ffa020"/><stop offset="1" stop-color="#d85e00"/></linearGradient>
<linearGradient id="tcub" x1="0" y1="0" x2="0" y2="1"><stop offset="0" stop-color="#2c4f84"/><stop offset="1" stop-color="#16305a"/></linearGradient>
</defs>
<!-- terminal 28..55, 710..732 -->
<rect x="28.5" y="21.5" width="26.5" height="21.5" rx="1" fill="#d8d8d6" stroke="#8c8c8a" stroke-width="1"/>
<rect x="30.5" y="23.5" width="22.5" height="17.5" fill="url(#tterm)"/>
<path d="M31.5 25.8 l2 1.5 l-2 1.5" stroke="#e8e8e8" stroke-width="0.8" fill="none"/>
<rect x="33.5" y="29.5" width="2.5" height="1" fill="#ddd"/>
<path d="M39 40 l4 -15 h3 l-4 15z M44 40 l4 -15 h2 l-4 15z" fill="#6a7670" opacity="0.6"/>
<!-- tux 88..120, 705..734 -->
<path d="M108.5 16.5 Q115.5 19.5 118 27" stroke="#f2c418" stroke-width="2" fill="none"/>
<path d="M107.5 19 Q112.5 21.5 114.5 27" stroke="#5f98e0" stroke-width="1.4" fill="none"/>
<circle cx="93" cy="24.5" r="1.9" fill="#3d86d8"/><path d="M94.6 24.2 v-5.4 l3.4 -1.4 v5" stroke="#3d86d8" stroke-width="1" fill="none"/>
<circle cx="96.8" cy="22.8" r="1.6" fill="#3d86d8"/>
<path d="M91 20.5 l2.5 -2" stroke="#e0b020" stroke-width="1.2"/>
<path d="M96 36 L88.5 41" stroke="#1a1a1a" stroke-width="2.2" stroke-linecap="round"/>
<path d="M113 36 L120 41" stroke="#1a1a1a" stroke-width="2.2" stroke-linecap="round"/>
<ellipse cx="104.5" cy="37" rx="9.3" ry="7.5" fill="#111"/>
<ellipse cx="104.2" cy="29.8" rx="6.8" ry="6.3" fill="#151515"/>
<ellipse cx="104.2" cy="27" rx="5" ry="3" fill="#8a8a8a"/>
<circle cx="101.9" cy="29.3" r="2.1" fill="#f0f0f0"/><circle cx="106.5" cy="29.3" r="2.1" fill="#f0f0f0"/>
<circle cx="102.3" cy="29.6" r="0.8" fill="#222"/><circle cx="106.1" cy="29.6" r="0.8" fill="#222"/>
<path d="M101.5 32.6 h5.4 l-2.7 2.6z" fill="#f2b800"/>
<rect x="96.5" y="34" width="16.5" height="9" fill="#3a72d0"/>
<path d="M98 35.5 h3 l1 3 l-2 2 h-2z M103 35 h4 l-1 4 h-2z M108 36 h3.5 v4 l-2 1.5z M104 40 h2 v2.5 h-2z" fill="#e8f0ff"/>
<path d="M108.5 34.5 v8.5" stroke="#e04040" stroke-width="0.6"/>
<ellipse cx="98.5" cy="43" rx="4.5" ry="2.3" fill="#f4c400"/><ellipse cx="110.5" cy="43" rx="4.5" ry="2.3" fill="#f4c400"/>
<!-- virtualbox 151..177, 705..735 -->
<ellipse cx="164" cy="42.5" rx="6" ry="2.8" fill="#b8c4d8"/>
<rect x="161.5" y="37" width="5" height="5" fill="#c8d0e0"/>
<path d="M164 17 L176 23 L176 37 L164 43 L152 37 L152 23 Z" fill="#f0f4fa" stroke="#c8d4e8" stroke-width="0.8"/>
<path d="M164 19.8 L173 24.2 L164 28.4 L155 24.2 Z" fill="url(#tcub)"/>
<path d="M154.2 26.2 L162.8 30.4 L162.8 40.2 L154.2 36 Z" fill="#1d3c6c"/>
<path d="M165.2 30.4 L173.8 26.2 L173.8 36 L165.2 40.2 Z" fill="#264a7e"/>
<!-- VNC 212..244, 705..737 -->
<rect x="212" y="16" width="32" height="32" rx="3.5" fill="#2e8ff0"/>
<path d="M217 22.5 L223 41.5 L229 22.5" stroke="#fff" stroke-width="1.6" fill="none"/>
<path d="M231 31 v-4.5 a4.2 4.2 0 0 1 8.4 0 v4.5" stroke="#fff" stroke-width="1.5" fill="none"/>
<path d="M239.5 41 h-4.6 a3.8 3.8 0 0 1 0 -7.6 h4.6" stroke="#fff" stroke-width="1.5" fill="none"/>
<!-- clover 275..304, 706..736 -->
<defs>
<linearGradient id="lr" x1="0" y1="0" x2="1" y2="0"><stop offset="0" stop-color="#ffb0a0"/><stop offset="1" stop-color="#f04818"/></linearGradient>
<linearGradient id="ly" x1="0" y1="0" x2="1" y2="0"><stop offset="0" stop-color="#ffd070"/><stop offset="1" stop-color="#f8a010"/></linearGradient>
<linearGradient id="lb" x1="0" y1="0" x2="1" y2="0"><stop offset="0" stop-color="#5aa0f0"/><stop offset="1" stop-color="#1c5cb0"/></linearGradient>
<linearGradient id="lg" x1="0" y1="0" x2="1" y2="0"><stop offset="0" stop-color="#70d050"/><stop offset="1" stop-color="#189010"/></linearGradient>
</defs>
<g id="clv" transform="translate(289.4 32.4) scale(0.9)">
<path d="M0 0 C3 -3.2 6.2 -7.6 10.2 -7.4 C14.2 -7.2 15.6 -3.6 14.8 0 C15.6 3.6 14.2 7.2 10.2 7.4 C6.2 7.6 3 3.2 0 0 Z" fill="url(#lr)" transform="rotate(-68) translate(1.2 0)"/>
<path d="M0 0 C3 -3.2 6.2 -7.6 10.2 -7.4 C14.2 -7.2 15.6 -3.6 14.8 0 C15.6 3.6 14.2 7.2 10.2 7.4 C6.2 7.6 3 3.2 0 0 Z" fill="url(#ly)" transform="rotate(22) translate(1.2 0)"/>
<path d="M0 0 C3 -3.2 6.2 -7.6 10.2 -7.4 C14.2 -7.2 15.6 -3.6 14.8 0 C15.6 3.6 14.2 7.2 10.2 7.4 C6.2 7.6 3 3.2 0 0 Z" fill="url(#lb)" transform="rotate(112) translate(1.2 0)"/>
<path d="M0 0 C3 -3.2 6.2 -7.6 10.2 -7.4 C14.2 -7.2 15.6 -3.6 14.8 0 C15.6 3.6 14.2 7.2 10.2 7.4 C6.2 7.6 3 3.2 0 0 Z" fill="url(#lg)" transform="rotate(202) translate(1.2 0)"/>
</g>
<use href="#clv" x="310" y="0"/>
<!-- thunderbird 336..368, 705..737 -->
<circle cx="352" cy="32" r="15.5" fill="#1d6fd8"/>
<path d="M340 24 C346 16 360 15 366 26 C364 38 356 46 346 44 Z" fill="#3fa0f0" opacity="0.8"/>
<path d="M339 28 L360 24 L362 43 L340 46 Z" fill="#f8f8fb"/>
<path d="M340 29 L350 37 L361 26" stroke="#9aa" stroke-width="0.6" fill="none"/>
<path d="M346 17 C352 14 360 15 365 21 C357 19 350 21 346 26 Z" fill="#5cb0f4"/>
<!-- VLC 401..427, 706..736 -->
<path d="M403 42 L425 42 L427 46 L401 46 Z" fill="#f49a10"/>
<path d="M402 42 L426 42 L422 38 L406 38 Z" fill="#ff9e1a"/>
<path d="M411 17.5 Q414 15 417 17.5 L423 41 Q414 44 405 41 Z" fill="url(#tvlc)"/>
<path d="M409.5 23.5 Q414 25 418.5 23.5 L420 29 Q414 31 408 29 Z" fill="#d8dde0"/>
<path d="M407 33.5 Q414 36 421 33.5 L422.5 38.5 Q414 41 405.5 38.5 Z" fill="#d8dde0"/>
<!-- calculator 462..490, 705..735 -->
<rect x="462.5" y="16.5" width="26.5" height="29" rx="2" fill="#9a9a94" stroke="#4a4a46" stroke-width="1"/>
<rect x="463.5" y="17.5" width="24.5" height="8" fill="#3c3c38"/>
<rect x="465.5" y="19.5" width="21" height="5" fill="#88e048"/>
<g fill="#e4e4e0">
<rect x="468" y="29" width="3" height="2"/><rect x="473" y="29" width="3" height="2"/><rect x="478" y="29" width="3" height="2"/><rect x="483" y="29" width="3" height="2"/>
<rect x="468" y="33" width="3" height="2"/><rect x="473" y="33" width="3" height="2"/><rect x="478" y="33" width="3" height="2"/><rect x="483" y="33" width="3" height="2"/>
<rect x="468" y="37" width="3" height="2"/><rect x="473" y="37" width="3" height="2"/><rect x="478" y="37" width="3" height="2"/>
<rect x="468" y="41" width="3" height="2"/><rect x="473" y="41" width="3" height="2"/><rect x="478" y="41" width="3" height="2"/><rect x="483" y="37" width="3" height="6"/>
</g>
<g fill="#2e3a36"><circle cx="465.5" cy="30" r="1.3"/><circle cx="465.5" cy="34" r="1.3"/><circle cx="465.5" cy="38" r="1.3"/><circle cx="465.5" cy="42" r="1.3"/></g>
<!-- gnucash 523..553, 708..736 -->
<rect x="527.5" y="19.5" width="21" height="18" fill="#eceeec" stroke="#d8dad8" stroke-width="1"/>
<path d="M531 22 v14 M528 26 h20 M528 30 h20 M528 34 h20 M535 20 v17 M540 20 v17 M545 20 v17" stroke="#d4d8d4" stroke-width="0.5"/>
<path d="M529.5 34 L534 27 L537.5 30 L542 24" stroke="#3a6cc0" stroke-width="1" fill="none"/>
<path d="M523.5 36.5 h18 v9 h-18z" fill="#5cb81c" stroke="#2e7010" stroke-width="0.8"/>
<path d="M524 39 h17 M524 41.5 h17 M524 44 h17" stroke="#a8e860" stroke-width="0.9"/>
<rect x="531.5" y="36" width="2.2" height="10" fill="#e8e8e8"/>
<g fill="#e2cc40" stroke="#8a7414" stroke-width="0.6">
<ellipse cx="549.2" cy="44.4" rx="3.8" ry="1.6"/><ellipse cx="549.2" cy="42" rx="3.8" ry="1.6"/><ellipse cx="549.2" cy="39.6" rx="3.8" ry="1.6"/><ellipse cx="549.2" cy="37.2" rx="3.8" ry="1.6"/><ellipse cx="549.2" cy="34.8" rx="3.8" ry="1.6"/><ellipse cx="549.2" cy="32.4" rx="3.8" ry="1.6"/><ellipse cx="549.2" cy="30" rx="3.8" ry="1.6"/><ellipse cx="549.2" cy="28" rx="3.8" ry="1.6"/>
<ellipse cx="545.4" cy="44.4" rx="3.4" ry="1.5"/><ellipse cx="545.4" cy="42.1" rx="3.4" ry="1.5"/><ellipse cx="545.4" cy="39.8" rx="3.4" ry="1.5"/><ellipse cx="545.4" cy="37.5" rx="3.4" ry="1.5"/>
</g>
<!-- libreoffice calc 711..737, 705..737 -->
<path d="M713 17 H728 L736 25 V46 H713 Z" fill="#e8e8e8" stroke="#18a018" stroke-width="2"/>
<path d="M730 16 H737.5 V24 Z" fill="#18a018"/>
<rect x="716.5" y="29" width="15" height="13" fill="#1e9a1e"/>
<g fill="#b8f0b0"><rect x="718" y="30.5" width="3.5" height="2"/><rect x="723" y="30.5" width="3.5" height="2"/><rect x="728" y="30.5" width="2.5" height="2"/>
<rect x="718" y="34" width="3.5" height="2"/><rect x="723" y="34" width="3.5" height="2"/><rect x="718" y="37.5" width="3.5" height="2"/><rect x="718" y="40" width="3.5" height="1.5"/></g>
<rect x="725" y="35" width="7.5" height="7.5" fill="#f4f4f4" stroke="#777" stroke-width="0.8"/>
<rect x="726.8" y="39" width="1.5" height="3" fill="#3a8de0"/><rect x="729.3" y="36.5" width="1.5" height="5.5" fill="#e06a20"/>
<!-- indicators -->
<g fill="#e05a24"><rect x="37" y="50" width="10" height="3"/><rect x="347" y="50" width="10" height="3"/><rect x="533" y="50" width="10" height="3"/><rect x="595" y="50" width="10" height="3"/><rect x="657" y="50" width="10" height="3"/><rect x="719" y="50" width="10" height="3"/></g>
</svg>

<!--/TASK-->
</body></html>
